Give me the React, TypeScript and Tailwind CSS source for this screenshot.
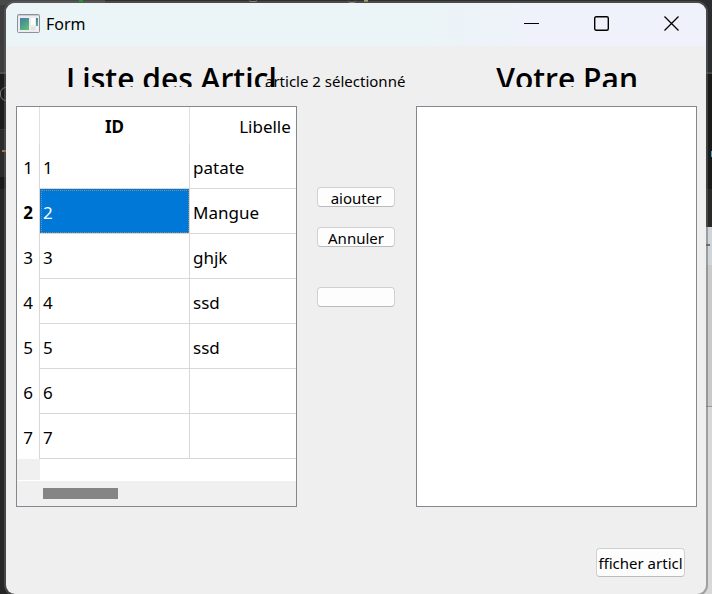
import { useState } from "react";

const articles = [
  { id: 1, libelle: "patate" },
  { id: 2, libelle: "Mangue" },
  { id: 3, libelle: "ghjk" },
  { id: 4, libelle: "ssd" },
  { id: 5, libelle: "ssd" },
  { id: 6, libelle: "" },
  { id: 7, libelle: "" },
];

function Backdrop() {
  return (
    <div aria-hidden="true" className="absolute inset-0 overflow-hidden bg-[#262626]">
      <div className="absolute inset-y-0 left-0 w-4">
        <div className="h-[72px] bg-[#3d3d3d]" />
        <div className="h-[57px] border-t-2 border-[#505050] bg-[#1c1c1c]" />
        <div className="h-12 border-t border-[#333] bg-[#2b2b2b]" />
        <div className="h-3 bg-[#191919]" />
      </div>
      <div className="absolute top-[87px] left-0 h-[14px] w-3 rounded-full border border-[#777]" />
      <div className="absolute top-[150px] left-[2px] h-[2px] w-1 bg-[#b87547]" />
      <div className="absolute inset-x-0 top-0 h-[5px] bg-[#2e2e2e]" />
      <div className="absolute top-0 left-0 h-[5px] w-[105px] bg-[#484848]" />
      <div className="absolute top-0 left-[79px] h-[2px] w-[4px] bg-[#16a016]" />
      <div className="absolute top-0 left-[249px] h-[2px] w-2 rounded-b border-b border-[#b3a878]" />
      <div className="absolute top-0 left-[348px] h-[3px] w-2 rounded-b border-b border-[#b3a878]" />
      <div className="absolute top-0 left-[364px] h-[2px] w-1 bg-[#a79a62]" />
      <div className="absolute inset-y-0 right-0 w-4">
        <div className="h-[72px] bg-[#2b2c2e]" />
        <div className="h-[117px] border-t-2 border-[#444] bg-[#1a1a19]" />
        <div className="h-[38px] bg-[#292927]" />
        <div className="h-[38px] bg-[#cfd5d9]" />
        <div className="h-[142px] border-b border-[#99999b] bg-[#cacaca]" />
        <div className="h-full bg-[#d8d8d8]" />
      </div>
      <div className="absolute top-[151px] right-0 h-[6px] w-px bg-[#4aa8c8]" />
      <div className="absolute top-[244px] right-[2px] h-[2px] w-1 bg-[#6c7074]" />
    </div>
  );
}

function FormIcon() {
  return (
    <svg width="23" height="19" viewBox="0 0 23 19" aria-hidden="true">
      <defs>
        <linearGradient id="screen" x1="0" y1="0" x2="0.6" y2="1">
          <stop offset="0" stopColor="#3f78a5" />
          <stop offset="1" stopColor="#5dbb78" />
        </linearGradient>
      </defs>
      <rect x="0.5" y="0.5" width="22" height="18" rx="1" fill="#ececee" stroke="#8b929b" />
      <path d="M1 1.5h21" stroke="#c8ccd2" />
      <rect x="3" y="4" width="9" height="12" fill="url(#screen)" />
      <path d="M3 9c3-3 6-3 9-4V4H3z" fill="#4f8cab" opacity=".5" />
      <rect x="14" y="4" width="4" height="7" fill="#fff" />
      <rect x="14" y="13" width="4" height="3" fill="#e2e2e2" />
      <rect x="19" y="4" width="2" height="8" fill="url(#screen)" />
      <rect x="19" y="13" width="2" height="3" fill="#f6f6f6" />
    </svg>
  );
}

function TitleBar() {
  return (
    <header className="flex h-[43px] items-stretch bg-linear-to-r from-[#ebf4f7] from-60% to-[#eff2fa] to-75%">
      <div className="flex flex-1 items-center gap-[6px] pb-[3px] pl-[11px]">
        <FormIcon />
        <span className="pt-px text-[16px] leading-6">Form</span>
      </div>
      <button type="button" aria-label="Réduire" className="flex w-[70px] items-center justify-center pb-[2px]">
        <svg width="15" height="15" viewBox="0 0 15 15">
          <path d="M0 7.5h15" stroke="#000" />
        </svg>
      </button>
      <button type="button" aria-label="Agrandir" className="flex w-[70px] items-center justify-center pb-[2px]">
        <svg width="15" height="15" viewBox="0 0 15 15" fill="none">
          <rect x="0.7" y="0.7" width="13.6" height="13.6" rx="1.5" stroke="#000" strokeWidth="1.4" />
        </svg>
      </button>
      <button type="button" aria-label="Fermer" className="flex w-[70px] items-center justify-center pb-[2px]">
        <svg width="15" height="15" viewBox="0 0 15 15">
          <path d="M0.5 0.5l14 14M14.5 0.5l-14 14" stroke="#000" strokeWidth="1.3" />
        </svg>
      </button>
    </header>
  );
}

function ArticleTable({ selected, onSelect }: { selected: number; onSelect: (id: number) => void }) {
  return (
    <div className="min-w-0 flex-1 overflow-hidden border border-[#828790] bg-white text-[17px] leading-6">
      <table className="w-[323px] table-fixed border-separate border-spacing-0">
        <thead>
          <tr className="h-[37px]">
            <th className="w-[23px] border-r border-[#e0e0e0] p-0" />
            <th scope="col" className="w-[150px] border-r border-[#e0e0e0] p-0 pt-[2px] font-bold">ID</th>
            <th scope="col" className="w-[150px] p-0 pt-[2px] font-normal">Libelle</th>
          </tr>
        </thead>
        <tbody>
          {articles.map((a) => {
            const active = a.id === selected;
            return (
              <tr key={a.id} className="h-[45px]" onClick={() => onSelect(a.id)}>
                <th
                  scope="row"
                  className={`border-r border-[#d8d8d8] p-0 pt-[3px] text-center ${active ? "font-bold" : "font-normal"}`}
                >
                  {a.id}
                </th>
                <td
                  className={`border-r border-b border-[#d8d8d8] p-0 ${
                    active ? "bg-[#0078d7] text-white outline-1 -outline-offset-2 outline-dotted outline-[#d99a5b]/60" : ""
                  }`}
                >
                  <div className="px-[3px] pt-[3px]">{a.id}</div>
                </td>
                <td className="border-b border-[#d8d8d8] p-0">
                  <div className="px-[3px] pt-[3px]">{a.libelle}</div>
                </td>
              </tr>
            );
          })}
        </tbody>
      </table>
      <div className="mb-px h-[21px] w-[23px] bg-[#f0f0f0]" />
      <div className="h-[25px] bg-[#f0f0f0] pt-[7px] pl-[26px]">
        <div className="h-[11px] w-[75px] bg-[#858585]" />
      </div>
    </div>
  );
}

const smallButton =
  "h-5 w-full overflow-hidden rounded-[4px] border border-[#d0d0d0] border-b-[#bcbcbc] bg-[#fdfdfd] text-[15px] leading-5";

export default function App() {
  const [selected, setSelected] = useState(2);
  return (
    <div className="relative flex h-screen overflow-hidden pt-[3px] pr-[6px] pl-[6px] font-['Noto_Sans','Open_Sans',sans-serif] text-black">
      <Backdrop />
      <main className="relative flex min-w-0 flex-1 flex-col overflow-hidden rounded-[9px] bg-[#efefef] shadow-[0_0_0_2px_#66666680]">
        <TitleBar />
        <div className="relative flex h-[41px] justify-between overflow-hidden pr-[68px] pl-[60px] font-['Open_Sans',sans-serif] text-[30px] leading-[44px] font-semibold">
          <h1 className="pt-[11px] whitespace-nowrap">Liste des Articl</h1>
          <h2 className="pt-[11px] whitespace-nowrap">Votre Pan</h2>
          <output className="absolute top-[25px] left-[259px] font-['Noto_Sans',sans-serif] text-[15px] leading-5 font-normal whitespace-nowrap">
            article {selected} sélectionné
          </output>
        </div>
        <div className="mt-[19px] flex pr-[9px] pl-[10px]">
          <ArticleTable selected={selected} onSelect={setSelected} />
          <div className="flex w-[119px] flex-col px-5 pt-[81px] pr-[21px]">
            <button type="button" className={smallButton}>aiouter</button>
            <button type="button" className={`${smallButton} mt-5`}>Annuler</button>
            <button type="button" aria-label="Valider" className={`${smallButton} mt-10`} />
          </div>
          <section aria-label="Votre panier" className="min-w-0 flex-1 border border-[#828790] bg-white" />
        </div>
        <div className="flex justify-end pt-[41px] pr-[21px]">
          <button
            type="button"
            className="h-[29px] w-[89px] overflow-hidden rounded-[4px] border border-[#d0d0d0] border-b-[#bcbcbc] bg-[#fdfdfd] text-[15px] leading-5 whitespace-nowrap"
          >
            fficher articl
          </button>
        </div>
      </main>
    </div>
  );
}
